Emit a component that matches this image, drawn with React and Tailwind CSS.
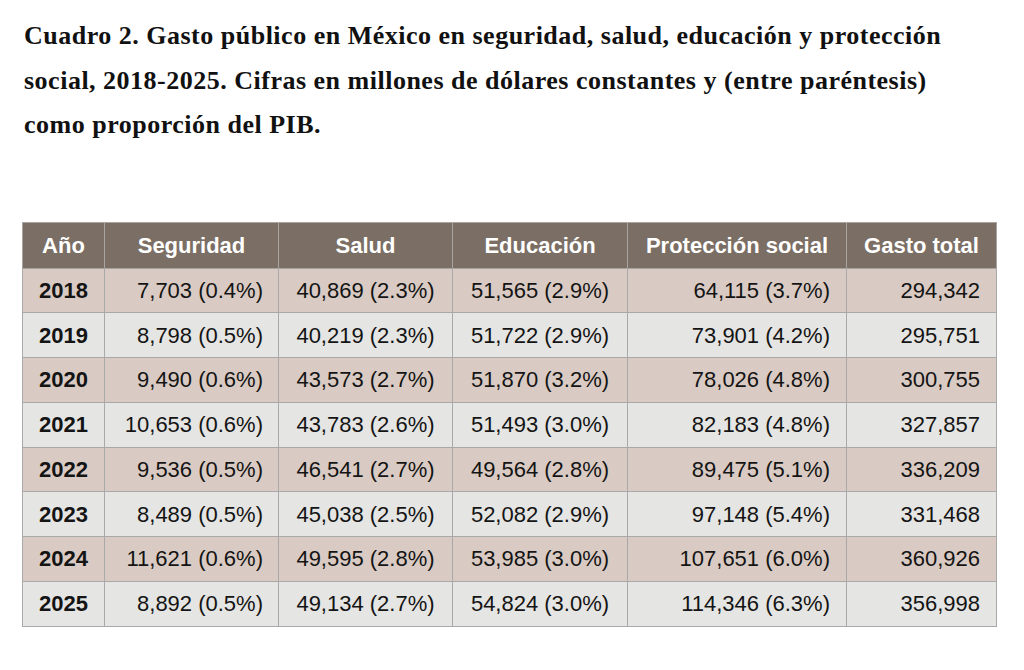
import React from "react";

const rows = [
  ["2018", "7,703 (0.4%)", "40,869 (2.3%)", "51,565 (2.9%)", "64,115 (3.7%)", "294,342"],
  ["2019", "8,798 (0.5%)", "40,219 (2.3%)", "51,722 (2.9%)", "73,901 (4.2%)", "295,751"],
  ["2020", "9,490 (0.6%)", "43,573 (2.7%)", "51,870 (3.2%)", "78,026 (4.8%)", "300,755"],
  ["2021", "10,653 (0.6%)", "43,783 (2.6%)", "51,493 (3.0%)", "82,183 (4.8%)", "327,857"],
  ["2022", "9,536 (0.5%)", "46,541 (2.7%)", "49,564 (2.8%)", "89,475 (5.1%)", "336,209"],
  ["2023", "8,489 (0.5%)", "45,038 (2.5%)", "52,082 (2.9%)", "97,148 (5.4%)", "331,468"],
  ["2024", "11,621 (0.6%)", "49,595 (2.8%)", "53,985 (3.0%)", "107,651 (6.0%)", "360,926"],
  ["2025", "8,892 (0.5%)", "49,134 (2.7%)", "54,824 (3.0%)", "114,346 (6.3%)", "356,998"],
];

const headers = ["Año", "Seguridad", "Salud", "Educación", "Protección social", "Gasto total"];

export default function App() {
  return (
    <div className="w-[1024px] h-[670px] bg-white overflow-hidden">
      <div
        className="pt-[14px] pl-[24px] text-[26px] leading-[44.5px] tracking-[0.5px] font-bold text-[#111] whitespace-nowrap"
        style={{ fontFamily: '"Liberation Serif", "Times New Roman", serif' }}
      >
        <div>Cuadro 2. Gasto público en México en seguridad, salud, educación y protección</div>
        <div>social, 2018-2025. Cifras en millones de dólares constantes y (entre paréntesis)</div>
        <div>como proporción del PIB.</div>
      </div>
      <div className="mt-[74px] ml-[22px]">
        <table
          className="border-collapse text-[22px] text-[#141414]"
          style={{ fontFamily: '"Liberation Sans", Arial, sans-serif' }}
        >
          <colgroup>
            <col className="w-[82px]" />
            <col className="w-[174px]" />
            <col className="w-[174px]" />
            <col className="w-[175px]" />
            <col className="w-[219px]" />
            <col className="w-[150px]" />
          </colgroup>
          <thead>
            <tr className="h-[46px] bg-[#7b6e64]">
              {headers.map((h) => (
                <th key={h} className="border border-[#a9a4a0] font-bold text-white text-center px-[10px]">
                  {h}
                </th>
              ))}
            </tr>
          </thead>
          <tbody>
            {rows.map((r, i) => (
              <tr key={r[0]} className={i % 2 === 0 ? "h-[44.75px] bg-[#d9cbc3]" : "h-[44.75px] bg-[#e5e5e3]"}>
                <td className="border border-[#a9a9a9] text-center font-bold">{r[0]}</td>
                <td className="border border-[#a9a9a9] text-right pr-[15px]">{r[1]}</td>
                <td className="border border-[#a9a9a9] text-center">{r[2]}</td>
                <td className="border border-[#a9a9a9] text-center">{r[3]}</td>
                <td className="border border-[#a9a9a9] text-right pr-[16px]">{r[4]}</td>
                <td className="border border-[#a9a9a9] text-right pr-[16px]">{r[5]}</td>
              </tr>
            ))}
          </tbody>
        </table>
      </div>
    </div>
  );
}
